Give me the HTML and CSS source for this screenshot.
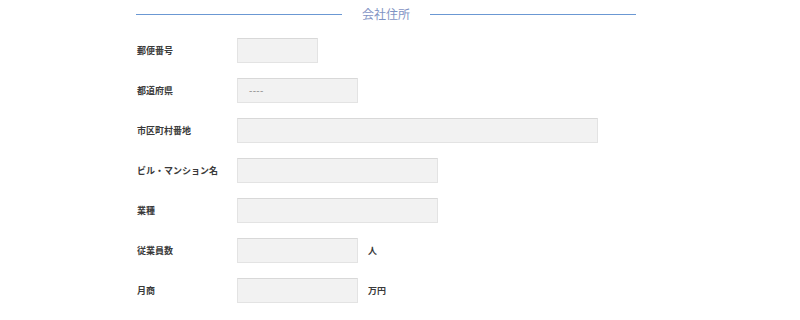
FILE: index.html
```html
<!DOCTYPE html>
<html lang="ja">
<head>
    <meta charset="UTF-8">
    <title>会社住所</title>
    <link rel="stylesheet" href="styles.css">
</head>
<body>
    <div class="section">
        <h2 class="section-title"><span>会社住所</span></h2>
        <div class="form">
            <div class="row">
                <label>郵便番号</label>
                <input type="text" class="w-xs">
            </div>
            <div class="row">
                <label>都道府県</label>
                <div class="select w-s">----</div>
            </div>
            <div class="row">
                <label>市区町村番地</label>
                <input type="text" class="w-l">
            </div>
            <div class="row">
                <label>ビル・マンション名</label>
                <input type="text" class="w-m">
            </div>
            <div class="row">
                <label>業種</label>
                <input type="text" class="w-m">
            </div>
            <div class="row">
                <label>従業員数</label>
                <input type="text" class="w-s">
                <span class="unit">人</span>
            </div>
            <div class="row">
                <label>月商</label>
                <input type="text" class="w-s">
                <span class="unit">万円</span>
            </div>
        </div>
    </div>
</body>
</html>
```

FILE: styles.css
```css
body {
    margin: 0;
    background: #fff;
    font-family: "Noto Sans CJK JP", "Noto Sans", sans-serif;
    color: #333;
}
.section {
    width: 500px;
    margin-left: 136px;
    padding-top: 5px;
}
.section-title {
    display: flex;
    align-items: center;
    gap: 20px;
    margin: 0;
    height: 18px;
    font-size: 12px;
    font-weight: normal;
    color: #7f93c4;
    line-height: 18px;
}
.section-title::before,
.section-title::after {
    content: "";
    flex: 1;
    height: 1px;
    background: #6b98d3;
}
.form {
    display: flex;
    flex-direction: column;
    gap: 15px;
    margin-top: 15px;
}
.row {
    display: flex;
    align-items: center;
    height: 25px;
}
.row label {
    width: 101px;
    padding-left: 1px;
    box-sizing: border-box;
    font-size: 9px;
    font-weight: bold;
    color: #3a3a3a;
}
.row input,
.select {
    box-sizing: border-box;
    height: 25px;
    margin: 0;
    border: 1px solid #e3e3e3;
    border-top-color: #d8d8d8;
    background: #f2f2f2;
    font-family: inherit;
}
.select {
    display: flex;
    align-items: center;
    padding-left: 11px;
    font-family: "Liberation Sans", sans-serif;
    font-size: 10px;
    letter-spacing: 0.3px;
    color: #999;
}
.w-xs { width: 81px; }
.w-s { width: 121px; }
.w-m { width: 201px; }
.w-l { width: 361px; }
.unit {
    margin-left: 10px;
    font-size: 9px;
    font-weight: bold;
    color: #3a3a3a;
}
```
